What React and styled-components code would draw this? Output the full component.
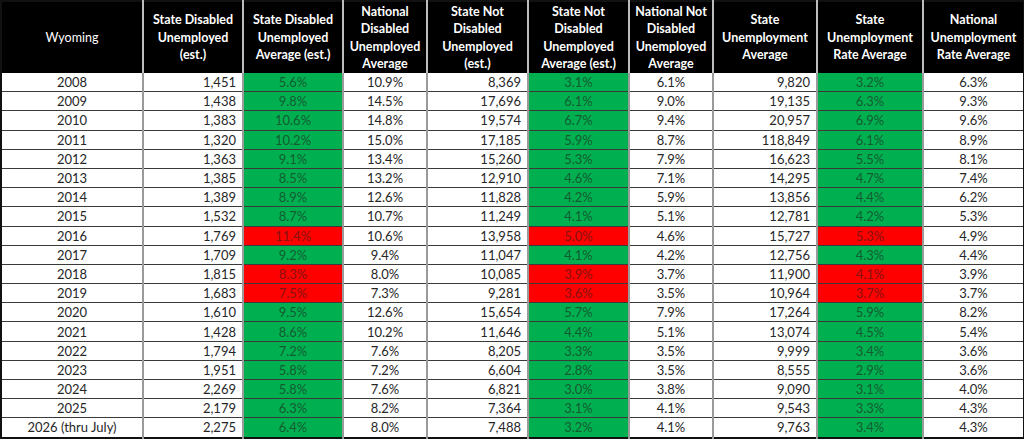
import React from 'react'
import styled, { createGlobalStyle } from 'styled-components'

const GlobalStyle = createGlobalStyle`
  html, body { margin: 0; padding: 0; background: #fff; }
  body { font-family: Lato, "Open Sans", "Liberation Sans", sans-serif; }
`

const widths = [142, 100, 100, 84, 101, 101, 84, 104, 106, 101]

const headers = [
    'Wyoming',
    'State Disabled Unemployed (est.)',
    'State Disabled Unemployed Average (est.)',
    'National Disabled Unemployed Average',
    'State Not Disabled Unemployed (est.)',
    'State Not Disabled Unemployed Average (est.)',
    'National  Not Disabled Unemployed Average',
    'State Unemployment Average',
    'State Unemployment Rate Average',
    'National Unemployment Rate Average',
]

// last flag marks the years where the state rates ran above the national ones
const rows = [
    ['2008', '1,451', '5.6%', '10.9%', '8,369', '3.1%', '6.1%', '9,820', '3.2%', '6.3%'],
    ['2009', '1,438', '9.8%', '14.5%', '17,696', '6.1%', '9.0%', '19,135', '6.3%', '9.3%'],
    ['2010', '1,383', '10.6%', '14.8%', '19,574', '6.7%', '9.4%', '20,957', '6.9%', '9.6%'],
    ['2011', '1,320', '10.2%', '15.0%', '17,185', '5.9%', '8.7%', '118,849', '6.1%', '8.9%'],
    ['2012', '1,363', '9.1%', '13.4%', '15,260', '5.3%', '7.9%', '16,623', '5.5%', '8.1%'],
    ['2013', '1,385', '8.5%', '13.2%', '12,910', '4.6%', '7.1%', '14,295', '4.7%', '7.4%'],
    ['2014', '1,389', '8.9%', '12.6%', '11,828', '4.2%', '5.9%', '13,856', '4.4%', '6.2%'],
    ['2015', '1,532', '8.7%', '10.7%', '11,249', '4.1%', '5.1%', '12,781', '4.2%', '5.3%'],
    ['2016', '1,769', '11.4%', '10.6%', '13,958', '5.0%', '4.6%', '15,727', '5.3%', '4.9%', true],
    ['2017', '1,709', '9.2%', '9.4%', '11,047', '4.1%', '4.2%', '12,756', '4.3%', '4.4%'],
    ['2018', '1,815', '8.3%', '8.0%', '10,085', '3.9%', '3.7%', '11,900', '4.1%', '3.9%', true],
    ['2019', '1,683', '7.5%', '7.3%', '9,281', '3.6%', '3.5%', '10,964', '3.7%', '3.7%', true],
    ['2020', '1,610', '9.5%', '12.6%', '15,654', '5.7%', '7.9%', '17,264', '5.9%', '8.2%'],
    ['2021', '1,428', '8.6%', '10.2%', '11,646', '4.4%', '5.1%', '13,074', '4.5%', '5.4%'],
    ['2022', '1,794', '7.2%', '7.6%', '8,205', '3.3%', '3.5%', '9,999', '3.4%', '3.6%'],
    ['2023', '1,951', '5.8%', '7.2%', '6,604', '2.8%', '3.5%', '8,555', '2.9%', '3.6%'],
    ['2024', '2,269', '5.8%', '7.6%', '6,821', '3.0%', '3.8%', '9,090', '3.1%', '4.0%'],
    ['2025', '2,179', '6.3%', '8.2%', '7,364', '3.1%', '4.1%', '9,543', '3.3%', '4.3%'],
    ['2026 (thru July)', '2,275', '6.4%', '8.0%', '7,488', '3.2%', '4.1%', '9,763', '3.4%', '4.3%'],
]

const rateCols = [2, 5, 8]
const countCols = [1, 4, 7]

const Sheet = styled.table`
    border-collapse: collapse;
    table-layout: fixed;
    width: 1022px;
    border: 2px solid #111;
    font-size: 13px;
    color: #222;
`

const HeadCell = styled.th`
    background: #000;
    color: #fff;
    font-weight: ${p => (p.$plain ? 400 : 700)};
    font-size: 12.5px;
    line-height: 17.5px;
    height: 71px;
    padding: 0 4px;
    text-align: center;
    vertical-align: middle;
    border-right: 2px solid #bdbdbd;
    &:last-child { border-right: none; }
`

const Cell = styled.td`
    height: 18.2px;
    padding: 0 6px;
    line-height: 18px;
    white-space: nowrap;
    text-align: ${p => p.$align};
    border-bottom: 1px solid #3a3a3a;
    border-right: 2px solid #9a9a9a;
    background: ${p => (p.$tone === 'good' ? '#00b050' : p.$tone === 'bad' ? '#ff0000' : '#fff')};
    color: ${p => (p.$tone === 'good' ? '#145c30' : p.$tone === 'bad' ? '#861212' : '#262626')};
    &:last-child { border-right: none; }
`

export default function App() {
    return (
        <>
            <GlobalStyle />
            <Sheet>
                <colgroup>
                    {widths.map((w, i) => <col key={i} style={{ width: w }} />)}
                </colgroup>
                <thead>
                    <tr>
                        {headers.map((h, i) => (
                            <HeadCell key={i} $plain={i === 0}>{h}</HeadCell>
                        ))}
                    </tr>
                </thead>
                <tbody>
                    {rows.map(r => {
                        const bad = r[10] === true
                        return (
                            <tr key={r[0]}>
                                {r.slice(0, 10).map((v, i) => (
                                    <Cell
                                        key={i}
                                        $align={countCols.includes(i) ? 'right' : 'center'}
                                        $tone={rateCols.includes(i) ? (bad ? 'bad' : 'good') : null}
                                    >
                                        {v}
                                    </Cell>
                                ))}
                            </tr>
                        )
                    })}
                </tbody>
            </Sheet>
        </>
    )
}
